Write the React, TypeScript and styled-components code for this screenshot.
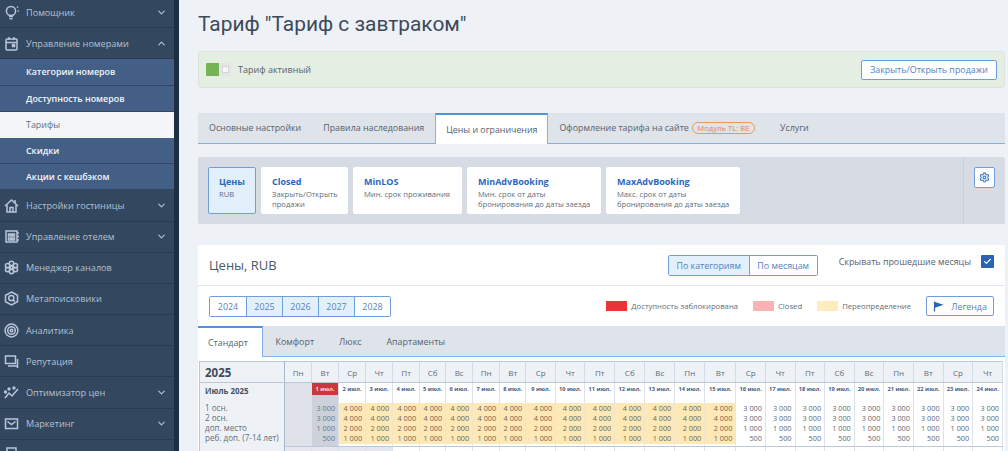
import React from 'react';
import styled, { createGlobalStyle } from 'styled-components';
import { ChevronDown, ChevronUp, Settings, Check } from 'lucide-react';

const GlobalStyle = createGlobalStyle`
  html, body { margin: 0; padding: 0; }
  body {
    width: 1008px;
    height: 451px;
    overflow: hidden;
    background: #eef2f6;
    font-family: "Open Sans", "Noto Sans", sans-serif;
  }
  * { box-sizing: border-box; }
`;

const Page = styled.div`
  display: flex;
  width: 1008px;
  height: 451px;
  overflow: hidden;
`;

/* sidebar */
const Sidebar = styled.nav`
  flex: 0 0 179px;
  height: 451px;
  overflow: hidden;
  background: #33475f;
  border-right: 5px solid #1f2e40;
  color: #b4c1d4;
`;

const NavList = styled.div`
  margin-top: -3px;
`;

const NavRow = styled.div`
  display: flex;
  align-items: center;
  height: 31.2px;
  padding: 0 7px 0 4px;
  border-bottom: 1px solid #2b3c52;
  font-size: 9.15px;
`;

const NavIcon = styled.svg`
  flex: 0 0 15px;
  width: 15px;
  height: 15px;
  margin-right: 7px;
  fill: none;
  stroke: #b9c6d9;
  stroke-width: 1.5;
`;

const NavLabel = styled.span`
  flex: 1;
`;

const SubList = styled.div`
  display: flex;
  flex-direction: column;
`;

const SubItem = styled.div<{ $active?: boolean }>`
  display: flex;
  align-items: center;
  height: 26.2px;
  padding-left: 26px;
  font-size: 8.9px;
  font-weight: ${p => (p.$active ? 400 : 600)};
  color: ${p => (p.$active ? '#63707f' : '#f2f5f9')};
  background: ${p => (p.$active ? '#f4f5f7' : '#435f86')};
  border-bottom: 1px solid ${p => (p.$active ? '#f4f5f7' : '#2f4563')};
`;

/* main column */
const Main = styled.main`
  flex: 1;
  min-width: 0;
  padding: 0 3px 0 19px;
`;

const Title = styled.h1`
  margin: 0;
  height: 51px;
  padding-top: 9px;
  font-family: Roboto, "Liberation Sans", sans-serif;
  font-size: 20.9px;
  line-height: 30px;
  font-weight: 400;
  color: #3c4a5c;
`;

const Notice = styled.div`
  display: flex;
  align-items: center;
  justify-content: space-between;
  height: 37px;
  padding: 0 7px;
  background: #e5eee2;
  border: 1px solid #dbe4da;
  border-radius: 4px;
`;

const NoticeLeft = styled.div`
  display: flex;
  align-items: center;
  gap: 7px;
  font-size: 9px;
  color: #56626f;
`;

const Toggle = styled.div`
  display: flex;
  width: 25px;
  height: 13px;
  border-radius: 1px;
  overflow: hidden;
  background: #e4e6e5;
`;

const ToggleOn = styled.div`
  width: 13px;
  background: #74b356;
`;

const ToggleKnob = styled.div`
  flex: 1;
  display: flex;
  align-items: center;
  justify-content: center;
  &::after {
    content: '';
    width: 5px;
    height: 5px;
    background: #f7f7f7;
    border: 1px solid #d5d6d6;
  }
`;

const OutlineButton = styled.button<{ $width: number }>`
  display: inline-flex;
  align-items: center;
  justify-content: center;
  gap: 7px;
  width: ${p => p.$width}px;
  height: 20px;
  padding: 0;
  font-family: inherit;
  font-size: 8.9px;
  color: #5482bf;
  background: #fff;
  border: 1px solid #6f9fd6;
  border-radius: 2px;
`;

const TabBar = styled.div`
  display: flex;
  height: 31px;
  margin-top: 25px;
  background: #dfe3ea;
  border-bottom: 1px solid #7fb2e5;
`;

const Tab = styled.div<{ $active?: boolean }>`
  display: flex;
  align-items: center;
  height: ${p => (p.$active ? '31px' : '30px')};
  padding: 0 11px;
  font-size: 8.85px;
  color: #56626f;
  ${p =>
    p.$active &&
    `background: #fff;
     border: 1px solid #7fb2e5;
     border-top: 2px solid #4f93d8;
     border-bottom: none;
     padding: 0 10px;`}
`;

const Badge = styled.span`
  display: inline-block;
  height: 12px;
  margin: 0 3px;
  padding: 0 4.5px;
  font-size: 7.7px;
  line-height: 10px;
  color: #e08a45;
  border: 1px solid #e39a5c;
  border-radius: 7px;
`;

const MetricPanel = styled.div`
  display: flex;
  height: 67px;
  margin-top: 13px;
  background: #d7dbe3;
  border-radius: 2px;
`;

const MetricCards = styled.div`
  flex: 1;
  display: flex;
  gap: 5px;
  padding: 10px;
`;

const MetricCard = styled.div<{ $width: number; $active?: boolean }>`
  width: ${p => p.$width}px;
  height: 47px;
  padding: 6px 10px 0;
  white-space: nowrap;
  background: ${p => (p.$active ? '#e2f0fc' : '#fff')};
  border: 1px solid ${p => (p.$active ? '#6f9fd6' : '#fff')};
  border-radius: 2px;
`;

const MetricTitle = styled.div`
  font-size: 9px;
  line-height: 15px;
  font-weight: 700;
  color: #2a68bf;
`;

const MetricText = styled.div`
  font-size: 7.6px;
  line-height: 10.2px;
  color: #626d79;
`;

const MetricSide = styled.div`
  flex: 0 0 42px;
  padding: 10px 0 0 10px;
  border-left: 1px solid #c9ced9;
`;

const GearButton = styled.div`
  display: flex;
  align-items: center;
  justify-content: center;
  width: 21px;
  height: 21px;
  color: #3d7cc9;
  background: #fff;
  border: 1px solid #6f9fd6;
  border-radius: 2px;
`;

const Card = styled.section`
  margin-top: 21px;
  background: #fff;
  border-radius: 2px;
`;

const CardHead = styled.div`
  display: flex;
  align-items: flex-start;
  height: 41px;
  padding: 10px 11px 0;
  border-bottom: 1px solid #e3e7ee;
`;

const CardTitle = styled.h2`
  flex: 1;
  margin: 0;
  font-size: 13px;
  line-height: 21px;
  font-weight: 400;
  color: #4b5766;
`;

const Segments = styled.div`
  display: flex;
  border: 1px solid #6f9fd6;
  border-radius: 2px;
`;

const Segment = styled.div<{ $width: number; $on?: boolean }>`
  display: flex;
  align-items: center;
  justify-content: center;
  width: ${p => p.$width}px;
  height: 19px;
  font-size: 8.9px;
  color: #5482bf;
  background: ${p => (p.$on ? '#e2f0fc' : '#fff')};
  & + & { border-left: 1px solid #6f9fd6; }
`;

const HideLabel = styled.div`
  margin: -3px 10px 0 21px;
  font-size: 8.9px;
  line-height: 20px;
  color: #56626f;
`;

const CheckBox = styled.div`
  display: flex;
  align-items: center;
  justify-content: center;
  width: 13px;
  height: 13px;
  color: #fff;
  background: #2a62b4;
  border-radius: 1px;
`;

const FilterRow = styled.div`
  display: flex;
  align-items: center;
  justify-content: space-between;
  height: 40px;
  padding: 0 11px;
`;

const Years = styled(Segments)``;

const Legend = styled.div`
  display: flex;
  align-items: center;
`;

const LegendItem = styled.div`
  display: flex;
  align-items: center;
  gap: 4px;
  margin-right: 15px;
  font-size: 7.7px;
  color: #636e7b;
`;

const Swatch = styled.i<{ $color: string }>`
  display: block;
  width: 21px;
  height: 10px;
  background: ${p => p.$color};
`;

const RoomTabs = styled.div`
  display: flex;
  height: 31px;
  background: #dfe3ea;
  border-bottom: 1px solid #7fb2e5;
`;

const RoomTab = styled.div<{ $active?: boolean }>`
  display: flex;
  align-items: center;
  height: ${p => (p.$active ? '31px' : '30px')};
  padding: 0 12.5px;
  font-size: 8.9px;
  color: #56626f;
  ${p =>
    p.$active &&
    `width: 65px;
     padding: 0 10px;
     background: #fff;
     border-top: 2px solid #4f93d8;
     border-right: 1px solid #7fb2e5;`}
`;

const TableWrap = styled.div`
  padding: 4px 2px 0 1px;
  background: #fff;
`;

const Rates = styled.table`
  table-layout: fixed;
  width: 804px;
  border-collapse: collapse;
  border-top: 1px solid #bcc8da;
  border-left: 1px solid #bcc8da;
`;

const Weekday = styled.th`
  height: 21px;
  padding: 0;
  font-size: 8px;
  font-weight: 400;
  color: #5f6b7a;
  background: #eef2f6;
  border-right: 1px solid #d3dbe7;
  border-bottom: 1px solid #bcc8da;
`;

const YearCell = styled.th`
  padding: 0 0 0 5px;
  text-align: left;
  font-size: 11.5px;
  font-weight: 700;
  color: #3f4b5b;
  background: #eef2f6;
  border-right: 1px solid #a9b7cb;
  border-bottom: 1px solid #bcc8da;
`;

const SideCell = styled.td`
  height: 20px;
  padding: 0 0 0 5px;
  vertical-align: top;
  background: #eef2f6;
  border-right: 1px solid #a9b7cb;
`;

const MonthName = styled.div`
  margin-top: 3px;
  font-size: 7.9px;
  line-height: 11px;
  font-weight: 700;
  color: #46525f;
`;

const RowLabel = styled.div`
  font-size: 8.1px;
  line-height: 10.3px;
  color: #626d79;
  white-space: nowrap;
`;

type CellKind = 'off' | 'past' | 'over' | 'plain';

const cellBg: Record<CellKind, string> = {
  off: '#dfe2e9',
  past: '#cdd2da',
  over: '#fff',
  plain: '#fff',
};

const lineColor: Record<CellKind, string> = {
  off: '#dfe2e9',
  past: '#dbe2ec',
  over: '#efe6cd',
  plain: '#dbe2ec',
};

const DateCell = styled.td<{ $kind: CellKind }>`
  height: 20px;
  padding: 0;
  vertical-align: top;
  text-align: center;
  background: ${p => cellBg[p.$kind]};
  border-right: 1px solid ${p => (p.$kind === 'off' ? '#dfe2e9' : '#dbe2ec')};
`;

const DateLabel = styled.div<{ $today?: boolean }>`
  height: 12px;
  font-size: 5.7px;
  line-height: 12px;
  font-weight: 700;
  white-space: nowrap;
  color: ${p => (p.$today ? '#f6dcdc' : '#4a5d80')};
  background: ${p => (p.$today ? '#c9383e' : 'transparent')};
`;

const ValueCell = styled.td<{ $kind: CellKind }>`
  height: 44px;
  padding: 0;
  vertical-align: top;
  background: ${p => cellBg[p.$kind]};
  border-right: 1px solid ${p => lineColor[p.$kind]};
  border-bottom: 1px solid #bcc8da;
`;

const ValueBox = styled.div<{ $kind: CellKind }>`
  height: 41px;
  padding-right: 3px;
  text-align: right;
  background: ${p => (p.$kind === 'over' ? '#fee9b6' : 'transparent')};
`;

const Value = styled.div<{ $kind: CellKind }>`
  font-size: 7.3px;
  line-height: 10.3px;
  white-space: nowrap;
  color: ${p => (p.$kind === 'past' ? '#6a7481' : p.$kind === 'over' ? '#6f6854' : '#5e6976')};
`;

const FillerCell = styled.td<{ $grey?: boolean }>`
  height: 10px;
  padding: 0;
  background: ${p => (p.$grey ? '#e4e7ed' : '#fff')};
  border-right: 1px solid #dbe2ec;
`;

const FillerSide = styled.td`
  background: #eef2f6;
  border-right: 1px solid #a9b7cb;
`;

/* sidebar drawings */
const icons: Record<string, React.ReactNode> = {
  bulb: (
    <>
      <circle cx="7" cy="6" r="4.6" />
      <path d="M5 11.5h4M5.5 13.8h3" />
      <path d="M13 2.5l1 -.8M13.6 6h1.2" />
    </>
  ),
  calendar: (
    <>
      <rect x="2" y="3" width="11" height="11" rx="1" />
      <path d="M2 6.5h11M5 1v3M10 1v3" />
      <rect x="8.5" y="8.5" width="2" height="2" fill="#b9c6d9" />
    </>
  ),
  home: (
    <>
      <path d="M1 8l6.5 -6 6.5 6" />
      <path d="M3 7v7h9V7" />
      <path d="M6 14V9.5h3V14M11 2v3" />
    </>
  ),
  hotel: (
    <>
      <rect x="2" y="2" width="11" height="11" />
      <path d="M4.5 5h2.5v2H4.5zM8.5 5h2v2h-2zM4.5 9h2.5v2H4.5zM8.5 9h2v2h-2zM13 4h2M13 7.5h2M13 11h2" />
    </>
  ),
  flower: (
    <>
      <circle cx="7.5" cy="3.5" r="2.2" />
      <circle cx="7.5" cy="11.5" r="2.2" />
      <circle cx="3.6" cy="5.6" r="2.2" />
      <circle cx="11.4" cy="5.6" r="2.2" />
      <circle cx="3.6" cy="9.6" r="2.2" />
      <circle cx="11.4" cy="9.6" r="2.2" />
      <circle cx="7.5" cy="7.5" r="1.4" />
    </>
  ),
  meta: (
    <>
      <path d="M7.5 1l6 3.3v6.4l-6 3.3 -6 -3.3V4.3z" />
      <circle cx="7.3" cy="7" r="2.6" />
      <path d="M9.2 9l1.6 1.6" />
    </>
  ),
  target: (
    <>
      <circle cx="7.5" cy="7.5" r="6.4" />
      <circle cx="7.5" cy="7.5" r="3.8" />
      <circle cx="7.5" cy="7.5" r="1.3" />
    </>
  ),
  chat: (
    <>
      <path d="M1.5 2h10v7.5H1.5z" />
      <path d="M4 12h9.5V5M13.5 12v2" />
    </>
  ),
  trend: (
    <>
      <path d="M1 13l4 -5 3 3 6 -7" />
      <circle cx="5" cy="4" r=".9" fill="#b9c6d9" />
      <circle cx="10" cy="3" r=".9" fill="#b9c6d9" />
      <circle cx="1.5" cy="7" r=".9" fill="#b9c6d9" />
    </>
  ),
  mail: (
    <>
      <rect x="1.5" y="3" width="12" height="9.5" />
      <path d="M3.5 5.5l4 3 4 -3" />
    </>
  ),
  doc: <rect x="3" y="1" width="9" height="13" />,
};

const Glyph = ({ name }: { name: string }) => (
  <NavIcon viewBox="0 0 15 15">{icons[name]}</NavIcon>
);

const FlagIcon = () => (
  <svg width="11" height="11" viewBox="0 0 11 11">
    <path d="M1.5 0.5v10" stroke="#2a62b4" strokeWidth="1.2" />
    <path d="M2 1l8.5 2.8L2 6.8z" fill="#2a62b4" />
  </svg>
);

const subItems = ['Категории номеров', 'Доступность номеров', 'Тарифы', 'Скидки', 'Акции с кешбэком'];

const lowerNav = [
  { icon: 'home', label: 'Настройки гостиницы', arrow: true },
  { icon: 'hotel', label: 'Управление отелем', arrow: true },
  { icon: 'flower', label: 'Менеджер каналов', arrow: false },
  { icon: 'meta', label: 'Метапоисковики', arrow: false },
  { icon: 'target', label: 'Аналитика', arrow: false },
  { icon: 'chat', label: 'Репутация', arrow: false },
  { icon: 'trend', label: 'Оптимизатор цен', arrow: true },
  { icon: 'mail', label: 'Маркетинг', arrow: true },
  { icon: 'doc', label: '', arrow: false },
];

const metrics = [
  { title: 'Closed', lines: ['Закрыть/Открыть', 'продажи'], width: 87 },
  { title: 'MinLOS', lines: ['Мин. срок проживания'], width: 109 },
  { title: 'MinAdvBooking', lines: ['Мин. срок от даты', 'бронирования до даты заезда'], width: 134 },
  { title: 'MaxAdvBooking', lines: ['Макс. срок от даты', 'бронирования до даты заезда'], width: 134 },
];

const years = [
  { y: 2024, on: false },
  { y: 2025, on: true },
  { y: 2026, on: true },
  { y: 2027, on: true },
  { y: 2028, on: false },
];

const weekdays = ['Пн', 'Вт', 'Ср', 'Чт', 'Пт', 'Сб', 'Вс'];

// widths were read off the reference, the day columns are not all equal
const colWidths = [27, 27, 27, 27, 27, 26, 27, 27, 26, 30, 29, 30, 30, 30, 30, 31, 29.6, 29.6, 29.6, 29.6, 29.6, 29.6, 29.6, 29.6, 29.6];

const days = Array.from({ length: 24 }, (_, i) => i + 1);

const valuesFor = (day: number) =>
  day >= 2 && day <= 15 ? ['4 000', '4 000', '2 000', '1 000'] : ['3 000', '3 000', '1 000', '500'];

const kindFor = (day: number): CellKind => (day === 1 ? 'past' : day <= 15 ? 'over' : 'plain');

const rowLabels = ['1 осн.', '2 осн.', 'доп. место', 'реб. доп. (7-14 лет)'];

const App = () => {
  return (
    <Page>
      <GlobalStyle />
      <Sidebar>
        <NavList>
          <NavRow>
            <Glyph name="bulb" />
            <NavLabel>Помощник</NavLabel>
            <ChevronDown size={11} strokeWidth={2.5} />
          </NavRow>
          <NavRow>
            <Glyph name="calendar" />
            <NavLabel>Управление номерами</NavLabel>
            <ChevronUp size={11} strokeWidth={2.5} />
          </NavRow>
          <SubList>
            {subItems.map(item => (
              <SubItem key={item} $active={item === 'Тарифы'}>
                {item}
              </SubItem>
            ))}
          </SubList>
          {lowerNav.map(item => (
            <NavRow key={item.icon}>
              <Glyph name={item.icon} />
              <NavLabel>{item.label}</NavLabel>
              {item.arrow && <ChevronDown size={11} strokeWidth={2.5} />}
            </NavRow>
          ))}
        </NavList>
      </Sidebar>

      <Main>
        <Title>Тариф "Тариф с завтраком"</Title>
        <Notice>
          <NoticeLeft>
            <Toggle>
              <ToggleOn />
              <ToggleKnob />
            </Toggle>
            Тариф активный
          </NoticeLeft>
          <OutlineButton $width={136}>Закрыть/Открыть продажи</OutlineButton>
        </Notice>

        <TabBar>
          <Tab>Основные настройки</Tab>
          <Tab>Правила наследования</Tab>
          <Tab $active>Цены и ограничения</Tab>
          <Tab>
            Оформление тарифа на сайте <Badge>Модуль TL: BE</Badge>
          </Tab>
          <Tab>Услуги</Tab>
        </TabBar>

        <MetricPanel>
          <MetricCards>
            <MetricCard $width={48} $active>
              <MetricTitle>Цены</MetricTitle>
              <MetricText>RUB</MetricText>
            </MetricCard>
            {metrics.map(m => (
              <MetricCard key={m.title} $width={m.width}>
                <MetricTitle>{m.title}</MetricTitle>
                {m.lines.map(line => (
                  <MetricText key={line}>{line}</MetricText>
                ))}
              </MetricCard>
            ))}
          </MetricCards>
          <MetricSide>
            <GearButton>
              <Settings size={11} strokeWidth={2.4} />
            </GearButton>
          </MetricSide>
        </MetricPanel>

        <Card>
          <CardHead>
            <CardTitle>Цены, RUB</CardTitle>
            <Segments>
              <Segment $width={80} $on>
                По категориям
              </Segment>
              <Segment $width={68}>По месяцам</Segment>
            </Segments>
            <HideLabel>Скрывать прошедшие месяцы</HideLabel>
            <CheckBox>
              <Check size={9} strokeWidth={3} />
            </CheckBox>
          </CardHead>

          <FilterRow>
            <Years>
              {years.map(item => (
                <Segment key={item.y} $width={36} $on={item.on}>
                  {item.y}
                </Segment>
              ))}
            </Years>
            <Legend>
              <LegendItem>
                <Swatch $color="#f03237" />
                Доступность заблокирована
              </LegendItem>
              <LegendItem>
                <Swatch $color="#f9b3b3" />
                Closed
              </LegendItem>
              <LegendItem>
                <Swatch $color="#fdecbe" />
                Переопределение
              </LegendItem>
              <OutlineButton $width={68}>
                <FlagIcon />
                Легенда
              </OutlineButton>
            </Legend>
          </FilterRow>

          <RoomTabs>
            <RoomTab $active>Стандарт</RoomTab>
            <RoomTab>Комфорт</RoomTab>
            <RoomTab>Люкс</RoomTab>
            <RoomTab>Апартаменты</RoomTab>
          </RoomTabs>

          <TableWrap>
            <Rates>
              <colgroup>
                <col style={{ width: 85 }} />
                {colWidths.map((w, i) => (
                  <col key={i} style={{ width: w }} />
                ))}
              </colgroup>
              <thead>
                <tr>
                  <YearCell>2025</YearCell>
                  <Weekday>Пн</Weekday>
                  {days.map(d => (
                    <Weekday key={d}>{weekdays[d % 7]}</Weekday>
                  ))}
                </tr>
              </thead>
              <tbody>
                <tr>
                  <SideCell>
                    <MonthName>Июль 2025</MonthName>
                  </SideCell>
                  <DateCell $kind="off" />
                  {days.map(d => (
                    <DateCell key={d} $kind={kindFor(d) === 'past' ? 'past' : 'plain'}>
                      <DateLabel $today={d === 1}>{d} июл.</DateLabel>
                    </DateCell>
                  ))}
                </tr>
                <tr>
                  <SideCell>
                    {rowLabels.map(label => (
                      <RowLabel key={label}>{label}</RowLabel>
                    ))}
                  </SideCell>
                  <ValueCell $kind="off" />
                  {days.map(d => {
                    const kind = kindFor(d);
                    return (
                      <ValueCell key={d} $kind={kind}>
                        <ValueBox $kind={kind}>
                          {valuesFor(d).map((v, i) => (
                            <Value key={i} $kind={kind}>
                              {v}
                            </Value>
                          ))}
                        </ValueBox>
                      </ValueCell>
                    );
                  })}
                </tr>
                <tr>
                  <FillerSide />
                  <FillerCell $grey />
                  {days.map(d => (
                    <FillerCell key={d} $grey={d <= 3} />
                  ))}
                </tr>
              </tbody>
            </Rates>
          </TableWrap>
        </Card>
      </Main>
    </Page>
  );
};

export default App;
